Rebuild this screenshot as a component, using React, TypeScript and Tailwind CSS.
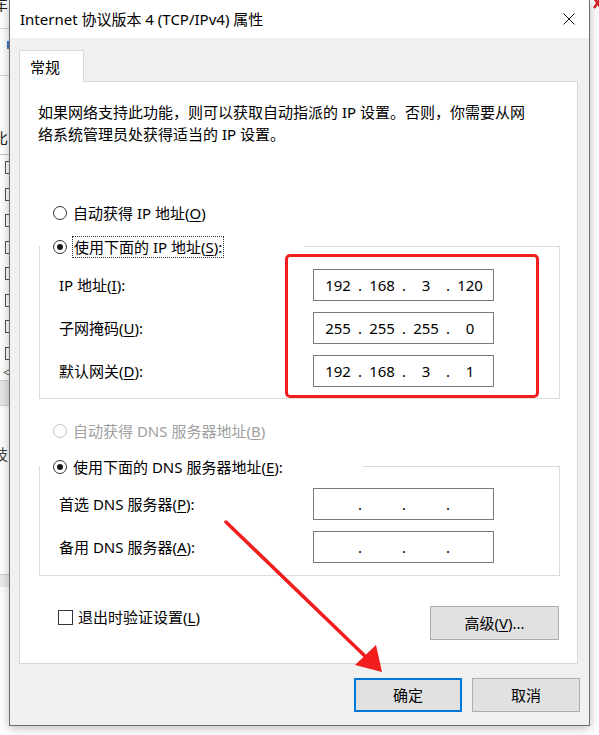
import { Fragment } from "react";

const Mn = ({ k }: { k: string }) => <u className="underline underline-offset-2">{k}</u>;

function Radio({ checked = false, disabled = false }: { checked?: boolean; disabled?: boolean }) {
  return (
    <span
      className={`flex h-[14px] w-[14px] shrink-0 items-center justify-center rounded-full border bg-white ${
        disabled ? "border-[#c4c4c4]" : "border-[#333333]"
      }`}
    >
      {checked && <span className="h-[6px] w-[6px] rounded-full bg-[#1a1a1a]" />}
    </span>
  );
}

function IpField({ parts }: { parts: string[] }) {
  return (
    <div className="flex h-[32px] w-[181px] items-center border border-[#7a7a7a] bg-white pl-[9px] text-[15px] leading-[20px]">
      {parts.map((p, i) => (
        <Fragment key={i}>
          <span className="w-[30px] text-center">{p}</span>
          {i < 3 && <span className="w-[14px] text-center">.</span>}
        </Fragment>
      ))}
    </div>
  );
}

function Row({ label, parts }: { label: React.ReactNode; parts: string[] }) {
  return (
    <div className="flex items-center">
      <div className="w-[254px] leading-[20px]">{label}</div>
      <IpField parts={parts} />
    </div>
  );
}

// the window behind the dialog, only its right edge shows
const LeftStrip = () => (
  <div className="relative w-[9px] shrink-0 overflow-hidden bg-white">
    <div className="-ml-[7px] flex w-[40px] flex-col text-[15px] text-[#222]">
      <div className="-mt-[6px] h-[34px] leading-[20px]">车</div>
      <div className="h-px bg-[#d4d4d4]" />
      <div className="flex h-[46px] items-start pt-[12px]">
        <span className="ml-[14px] h-[8px] w-[3px] bg-[#3b78c4]" />
      </div>
      <div className="h-px bg-[#d4d4d4]" />
      <div className="flex h-[78px] items-end pb-[6px] leading-[20px]">比</div>
      <div className="h-px bg-[#c8c8c8]" />
      <div className="flex flex-col gap-[13.5px] pl-[12px] pt-[6px]">
        {[1, 0, 1, 1, 0, 1, 1, 1].map((c, i) => (
          <span key={i} className="flex h-[13px] w-[13px] items-center justify-center border border-[#555]">
            {c === 1 && <span className="h-[5px] w-[3px] bg-[#222]" />}
          </span>
        ))}
      </div>
      <div className="mt-[6px] pl-[10px] text-[12px] leading-[14px] text-[#555]">&lt;</div>
      <div className="h-px bg-[#c8c8c8]" />
      <div className="h-[24px] bg-[#e6e6e6]" />
      <div className="h-px bg-[#d0d0d0]" />
      <div className="mt-[38px] leading-[20px] text-[#444]">技</div>
      <div className="mt-[110px] h-px bg-[#d0d0d0]" />
      <div className="h-[12px] bg-[#ececec]" />
    </div>
  </div>
);

export default function App() {
  return (
    <div className="relative flex h-[735px] w-[599px] overflow-hidden bg-white font-['Noto_Sans','Noto_Sans_CJK_SC',sans-serif] text-[15px] text-black">
      <LeftStrip />

      {/* dialog window */}
      <div className="relative z-10 flex h-[726px] w-[581px] shrink-0 flex-col border-x border-b border-[#6e6e6e] bg-[#f0f0f0] shadow-[0_2px_10px_rgba(0,0,0,0.28)]">
        <div className="flex h-[38px] items-center justify-between bg-white pl-[10px] pr-[14px]">
          <span className="leading-[20px]">Internet 协议版本 4 (TCP/IPv4) 属性</span>
          <svg width="12" height="12" viewBox="0 0 12 12">
            <path d="M0.5 0.5 L11.5 11.5 M11.5 0.5 L0.5 11.5" stroke="#111" strokeWidth="1" fill="none" />
          </svg>
        </div>

        <div className="flex flex-1 flex-col pl-[9px] pt-[12px]">
          <div className="relative z-10 -mb-px flex h-[32px] w-[65px] items-center border border-b-0 border-[#d9d9d9] bg-white pl-[10px] leading-[20px]">
            常规
          </div>

          <div className="flex h-[583px] w-[559px] flex-col border border-[#d9d9d9] bg-white">
            <p className="ml-[18px] mt-[19px] whitespace-nowrap leading-[22px]">
              如果网络支持此功能，则可以获取自动指派的 IP 设置。否则，你需要从网
              <br />
              络系统管理员处获得适当的 IP 设置。
            </p>

            <div className="ml-[33px] mt-[57px] flex h-[22px] items-center gap-[6px]">
              <Radio />
              <span className="leading-[20px]">
                自动获得 IP 地址(<Mn k="O" />)
              </span>
            </div>

            <div className="ml-[19px] mt-[22px] flex w-[521px] flex-col border border-[#dcdcdc] pb-[11px] pl-[19px]">
              <div className="-ml-[19px] -mt-[11px] flex h-[22px] w-[264px] items-center gap-[5px] bg-white pl-[13px]">
                <Radio checked />
                <span className="border border-dotted border-[#333] px-px leading-[20px]">
                  使用下面的 IP 地址(<Mn k="S" />):
                </span>
              </div>
              <div className="mt-[11px] flex flex-col gap-[11px]">
                <Row label={<>IP 地址(<Mn k="I" />):</>} parts={["192", "168", "3", "120"]} />
                <Row label={<>子网掩码(<Mn k="U" />):</>} parts={["255", "255", "255", "0"]} />
                <Row label={<>默认网关(<Mn k="D" />):</>} parts={["192", "168", "3", "1"]} />
              </div>
            </div>

            <div className="ml-[33px] mt-[21px] flex h-[22px] items-center gap-[6px] text-[#a0a0a0]">
              <Radio disabled />
              <span className="leading-[20px]">
                自动获得 DNS 服务器地址(<Mn k="B" />)
              </span>
            </div>

            <div className="ml-[19px] mt-[24px] flex w-[521px] flex-col border border-[#dcdcdc] pb-[12px] pl-[19px]">
              <div className="-ml-[19px] -mt-[11px] flex h-[22px] w-[323px] items-center gap-[6px] bg-white pl-[13px]">
                <Radio checked />
                <span className="leading-[20px]">
                  使用下面的 DNS 服务器地址(<Mn k="E" />):
                </span>
              </div>
              <div className="mt-[10px] flex flex-col gap-[11px]">
                <Row label={<>首选 DNS 服务器(<Mn k="P" />):</>} parts={["", "", "", ""]} />
                <Row label={<>备用 DNS 服务器(<Mn k="A" />):</>} parts={["", "", "", ""]} />
              </div>
            </div>

            <div className="ml-[38px] mr-[18px] mt-[30px] flex items-start justify-between">
              <div className="flex h-[22px] items-center gap-[5px]">
                <span className="h-[15px] w-[15px] border border-[#333] bg-white" />
                <span className="leading-[20px]">
                  退出时验证设置(<Mn k="L" />)
                </span>
              </div>
              <button className="flex h-[34px] w-[129px] items-center justify-center border border-[#adadad] bg-[#e1e1e1] leading-[20px]">
                高级(<Mn k="V" />)...
              </button>
            </div>
          </div>

          <div className="mt-[14px] flex justify-end gap-[10px] pr-[9px]">
            <button className="flex h-[34px] w-[108px] items-center justify-center border-2 border-[#0078d7] bg-[#e1e1e1] leading-[20px]">
              确定
            </button>
            <button className="flex h-[34px] w-[108px] items-center justify-center border border-[#adadad] bg-[#e1e1e1] leading-[20px]">
              取消
            </button>
          </div>
        </div>
      </div>

      {/* right strip of the window behind */}
      <div className="relative flex-1 bg-white">
        <svg className="absolute left-[3px] top-0" width="8" height="12" viewBox="0 0 8 12">
          <path d="M1 -2 L8 8 M8 -2 L1 8" stroke="#d42020" strokeWidth="2.5" fill="none" />
        </svg>
      </div>

      {/* red annotations */}
      <div className="pointer-events-none absolute left-[285px] top-[254px] z-20 h-[144px] w-[254px] rounded-[5px] border-[3px] border-[#f21d1d]" />
      <svg className="pointer-events-none absolute left-0 top-0 z-20" width="599" height="735" viewBox="0 0 599 735">
        <line x1="226" y1="522" x2="368" y2="659" stroke="#f21d1d" strokeWidth="3.5" strokeLinecap="round" />
        <polygon points="382,672 355,665 376,645" fill="#f21d1d" />
      </svg>
    </div>
  );
}
